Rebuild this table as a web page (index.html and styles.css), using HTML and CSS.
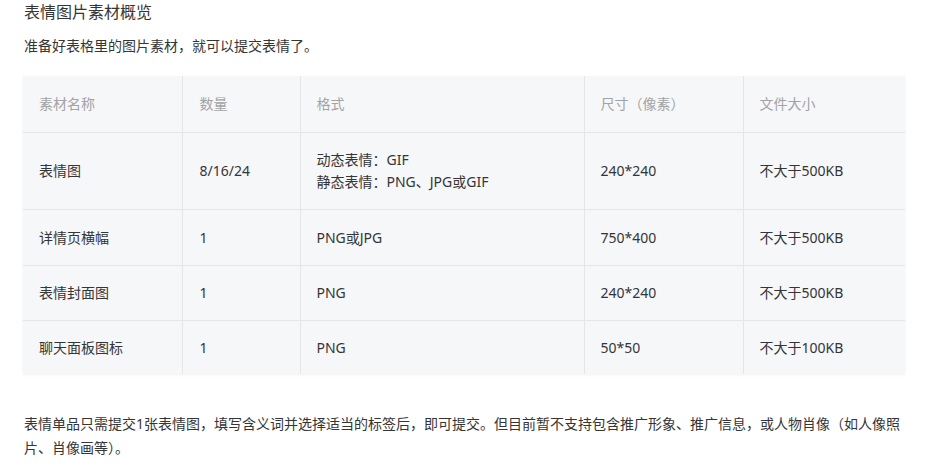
FILE: index.html
```html
<!DOCTYPE html>
<html lang="zh">
<head>
<meta charset="utf-8">
<link rel="stylesheet" href="styles.css">
</head>
<body>
<div class="page">
  <h2 class="title">表情图片素材概览</h2>
  <p class="desc">准备好表格里的图片素材，就可以提交表情了。</p>
  <table class="spec">
    <colgroup>
      <col class="c1"><col class="c2"><col class="c3"><col class="c4"><col class="c5">
    </colgroup>
    <thead>
      <tr><th>素材名称</th><th>数量</th><th>格式</th><th>尺寸（像素）</th><th>文件大小</th></tr>
    </thead>
    <tbody>
      <tr class="tall"><td>表情图</td><td>8/16/24</td><td>动态表情：GIF<br>静态表情：PNG、JPG或GIF</td><td>240*240</td><td>不大于500KB</td></tr>
      <tr class="mid"><td>详情页横幅</td><td>1</td><td>PNG或JPG</td><td>750*400</td><td>不大于500KB</td></tr>
      <tr><td>表情封面图</td><td>1</td><td>PNG</td><td>240*240</td><td>不大于500KB</td></tr>
      <tr class="last"><td>聊天面板图标</td><td>1</td><td>PNG</td><td>50*50</td><td>不大于100KB</td></tr>
    </tbody>
  </table>
  <p class="note">表情单品只需提交1张表情图，填写含义词并选择适当的标签后，即可提交。但目前暂不支持包含推广形象、推广信息，或人物肖像（如人像照片、肖像画等）。</p>
</div>
</body>
</html>
```

FILE: styles.css
```css
html, body {
  margin: 0;
  padding: 0;
  background: #fff;
}
body {
  font-family: "Noto Sans", "Noto Sans CJK SC", sans-serif;
  color: #353535;
}
.page {
  padding: 0 21px 0 23px;
}
.title {
  margin: 0;
  padding-left: 1px;
  font-size: 16px;
  font-weight: normal;
  line-height: 24px;
}
.desc {
  margin: 10px 0 0;
  padding-left: 1px;
  font-size: 14px;
  line-height: 24px;
}
.spec {
  margin-top: 18px;
  width: 882px;
  border-collapse: collapse;
  background: #f6f7f9;
  box-shadow: 0 1px 3px rgba(0,0,0,0.06);
  font-size: 14px;
  table-layout: fixed;
}
.c1 { width: 159px; }
.c2 { width: 118px; }
.c3 { width: 284px; }
.c4 { width: 159px; }
.c5 { width: 162px; }
.spec th, .spec td {
  text-align: left;
  padding: 0 0 0 16px;
  height: 54px;
  line-height: 22px;
  border-left: 1px solid #e5e6e9;
  border-top: 1px solid #e5e6e9;
  vertical-align: middle;
}
.spec th {
  height: 56px;
  font-weight: normal;
  color: #a3a3a3;
  border-top: none;
}
.spec td:first-child, .spec th:first-child { border-left: none; }
.spec th:nth-child(2), .spec td:nth-child(2) { padding-left: 17px; }
.spec tr.tall td { height: 76px; }
.spec tr.mid td { height: 55px; }
.spec tr.last td { height: 53px; }
.note {
  margin: 38px 0 0;
  padding-left: 1px;
  font-size: 14px;
  line-height: 24px;
}
```
